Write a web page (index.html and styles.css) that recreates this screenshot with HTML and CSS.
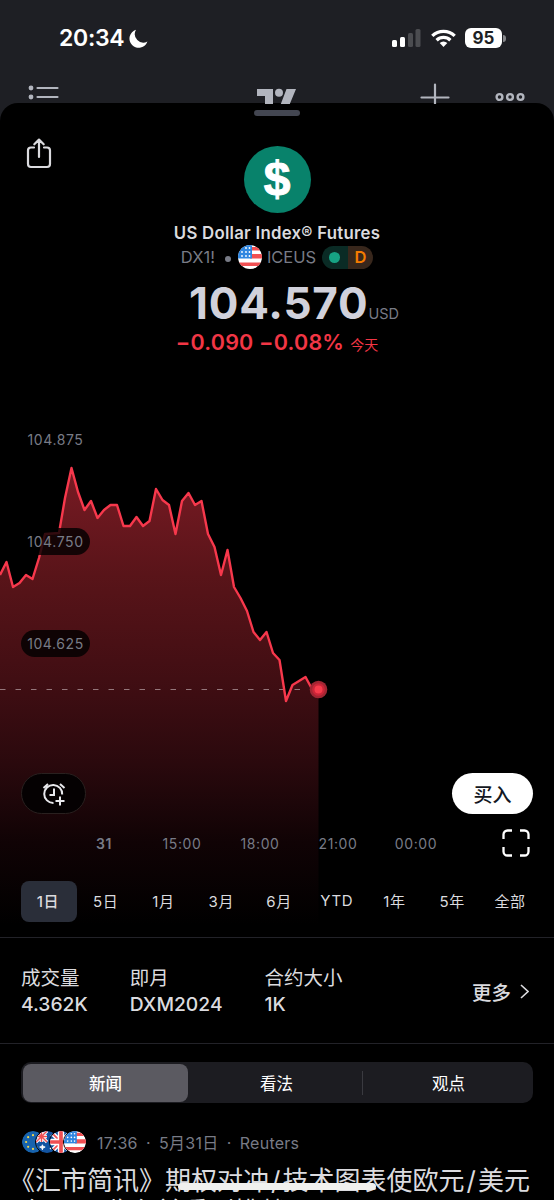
FILE: index.html
```
<!DOCTYPE html>
<html lang="zh-CN">
<head>
  <meta charset="utf-8">
  <meta name="viewport" content="width=device-width, initial-scale=1.0">
  <title>US Dollar Index Futures</title>
  <link rel="stylesheet" href="styles.css">
</head>
<body>

  <!-- Shared flag symbols -->
  <svg class="defs" width="0" height="0">
    <clipPath id="round"><circle cx="12" cy="12" r="12"/></clipPath>
    <symbol id="flag-us" viewBox="0 0 24 24">
      <g clip-path="url(#round)">
        <rect width="24" height="24" fill="#fff"/>
        <path d="M12 2h12v3.500H12zM12 9h12v4.500H12zM0 17.500h24v3.500H0z" fill="#f04f52"/>
        <rect width="14" height="13.500" fill="#2f86e0"/>
        <g fill="#fff">
          <circle cx="8" cy="3" r=".9"/><circle cx="11.500" cy="3" r=".9"/>
          <circle cx="4" cy="7" r=".9"/><circle cx="8" cy="7" r=".9"/><circle cx="11.500" cy="7" r=".9"/>
          <circle cx="4" cy="11" r=".9"/><circle cx="8" cy="11" r=".9"/><circle cx="11.500" cy="11" r=".9"/>
        </g>
      </g>
    </symbol>
    <symbol id="flag-eu" viewBox="0 0 24 24">
      <circle cx="12" cy="12" r="12" fill="#1763ad"/>
      <g fill="#f5d84a">
        <circle cx="12" cy="4.500" r="1.200"/><circle cx="17.300" cy="6.700" r="1.200"/><circle cx="19.500" cy="12" r="1.200"/><circle cx="17.300" cy="17.300" r="1.200"/>
        <circle cx="12" cy="19.500" r="1.200"/><circle cx="6.700" cy="17.300" r="1.200"/><circle cx="4.500" cy="12" r="1.200"/><circle cx="6.700" cy="6.700" r="1.200"/>
      </g>
    </symbol>
    <symbol id="flag-au" viewBox="0 0 24 24">
      <g clip-path="url(#round)">
        <rect width="24" height="24" fill="#1254a1"/>
        <path d="M0 0l12 12M12 0L0 12" stroke="#fff" stroke-width="3.500"/>
        <path d="M0 6h12M6 0v12" stroke="#fff" stroke-width="4"/>
        <path d="M0 0l12 12M12 0L0 12M0 6h12M6 0v12" stroke="#ef5053" stroke-width="1.600"/>
        <path d="M7 15l.8 2 2.200.500-2.200.800L7 20.500l-.8-2.200L4 17.500l2.200-.5z" fill="#fff" stroke="#fff"/>
        <circle cx="17" cy="5" r="1" fill="#fff"/><circle cx="19" cy="12" r="1" fill="#fff"/><circle cx="16" cy="19" r="1" fill="#fff"/>
      </g>
    </symbol>
    <symbol id="flag-gb" viewBox="0 0 24 24">
      <g clip-path="url(#round)">
        <rect width="24" height="24" fill="#1254a1"/>
        <path d="M0 0l24 24M24 0L0 24" stroke="#fff" stroke-width="5"/>
        <path d="M0 0l24 24M24 0L0 24" stroke="#ef5053" stroke-width="1.800"/>
        <path d="M0 12h24M12 0v24" stroke="#fff" stroke-width="7"/>
        <path d="M0 12h24M12 0v24" stroke="#ef5053" stroke-width="4"/>
      </g>
    </symbol>
  </svg>

  <div class="status-bar">
    <div class="clock">
      <span>20:34</span>
      <svg width="19" height="19" viewBox="0 0 19 19"><path d="M7 .8A9.200 9.200 0 1 0 18.400 12.500 8.500 8.500 0 0 1 7 .8z" fill="#fff"/></svg>
    </div>
    <div class="status-icons">
      <svg width="29" height="18" viewBox="0 0 29 18">
        <rect x="0" y="11" width="5" height="7" rx="1.500" fill="#fff"/>
        <rect x="8" y="8" width="5" height="10" rx="1.500" fill="#fff"/>
        <rect x="16" y="4" width="5" height="14" rx="1.500" fill="#4b4c50"/>
        <rect x="23.500" y="0" width="5" height="18" rx="1.500" fill="#4b4c50"/>
      </svg>
      <svg width="25" height="18" viewBox="0 0 25 18" fill="none" stroke="#fff" stroke-width="3.300">
        <path d="M1.300 6.900a16 16 0 0 1 22.400 0"/>
        <path d="M5.600 11.200a10 10 0 0 1 13.800 0"/>
        <path d="M12.500 18l-3.800-3.900a5.500 5.500 0 0 1 7.600 0z" fill="#fff" stroke="none"/>
      </svg>
      <div class="battery">95</div>
    </div>
  </div>

  <div class="app-bar">
    <svg width="32" height="20" viewBox="0 0 32 20" fill="#b2b5be">
      <circle cx="3" cy="5" r="2.400"/><circle cx="3" cy="14" r="2.400"/>
      <path d="M9.500 5h20M9.500 14h20" stroke="#b2b5be" stroke-width="2.200" stroke-linecap="round"/>
    </svg>
    <svg class="brand" width="40" height="16" viewBox="0 0 40 16" fill="#b2b5be">
      <path d="M0 1h16v15H8V8H0zM29.500 1H39l-6.200 15h-9z"/><circle cx="22" cy="4.800" r="4"/>
    </svg>
    <svg class="plus" width="30" height="21" viewBox="0 0 30 21" stroke="#b2b5be" stroke-width="2.200" stroke-linecap="round"><path d="M1.500 14.500h27M15 1.500V21"/></svg>
    <svg width="30" height="10" viewBox="0 0 30 10" fill="none" stroke="#b2b5be" stroke-width="2.400"><circle cx="4.500" cy="5" r="2.900"/><circle cx="15" cy="5" r="2.900"/><circle cx="25.500" cy="5" r="2.900"/></svg>
  </div>

  <main class="sheet">
    <div class="grabber"></div>
    <svg class="share" width="26" height="32" viewBox="0 0 26 32" fill="none" stroke="#dbdbdf" stroke-width="2.200" stroke-linecap="round" stroke-linejoin="round">
      <path d="M8 10.500H5a3 3 0 0 0-3 3v13.500a3 3 0 0 0 3 3h16a3 3 0 0 0 3-3V13.500a3 3 0 0 0-3-3H18M13 20V2.800M8.300 7.300L13 2.600l4.700 4.700"/>
    </svg>

    <!-- Symbol and price -->
    <header class="symbol">
      <div class="coin">$</div>
      <h1>US Dollar Index® Futures</h1>
      <div class="exchange">
        <span class="ticker">DX1!</span>
        <span class="dot"></span>
        <svg width="24" height="24"><use href="#flag-us"/></svg>
        <span class="market">ICEUS</span>
        <span class="badge"><i class="live"><b></b></i><i class="delay">D</i></span>
      </div>
      <div class="price"><strong>104.570</strong><span>USD</span></div>
      <div class="change"><strong>−0.090 −0.08%</strong><span>今天</span></div>
    </header>

    <section class="chart">
      <svg class="plot" width="554" height="517" viewBox="0 420 554 517">
        <defs>
          <linearGradient id="area" gradientUnits="userSpaceOnUse" x1="0" y1="465" x2="0" y2="925">
            <stop offset="0" stop-color="#7a1b24"/>
            <stop offset=".24" stop-color="#591419"/>
            <stop offset=".5" stop-color="#3d0d12"/>
            <stop offset=".65" stop-color="#2a090d"/>
            <stop offset=".82" stop-color="#100305"/>
            <stop offset="1" stop-color="#000"/>
          </linearGradient>
        </defs>
        <path fill="url(#area)" d="M0 575L6.500 562 13 587 19.500 583 26 575 32.500 579 39 558 45 534 59 533 65 498 71.500 468 78 492 84.500 510 91 501 97.500 518 104 510 110.500 505 117 505 123.500 526 130 526 136.500 517 143 526 149.500 521 156 489 162.500 500 169 505 175.500 534 182 501 188.500 493 195 505 201.500 501 208 534 214.500 547 221 575 227.500 550 234 587 240.500 598 247 611 253.500 632 260 640 266.500 632 273 653 279.500 660 286 701 292.500 685 299 681 305.500 677 312 689 318.500 689V925H0z"/>
        <path d="M0 689.500h318" stroke="#95777b" stroke-width="1" stroke-dasharray="5.500 10"/>
        <path fill="none" stroke="#f7384c" stroke-width="2.400" stroke-linejoin="round" d="M0 575L6.500 562 13 587 19.500 583 26 575 32.500 579 39 558 45 534 59 533 65 498 71.500 468 78 492 84.500 510 91 501 97.500 518 104 510 110.500 505 117 505 123.500 526 130 526 136.500 517 143 526 149.500 521 156 489 162.500 500 169 505 175.500 534 182 501 188.500 493 195 505 201.500 501 208 534 214.500 547 221 575 227.500 550 234 587 240.500 598 247 611 253.500 632 260 640 266.500 632 273 653 279.500 660 286 701 292.500 685 299 681 305.500 677 312 689 318.500 689"/>
        <circle cx="318.500" cy="689.500" r="8.800" fill="#a12633"/>
        <circle cx="318.500" cy="689.500" r="6.300" fill="#cb2538"/>
        <circle cx="318.500" cy="689.500" r="4" fill="#f73c4c"/>
      </svg>

      <div class="overlay">
        <div class="levels">
          <span class="clear">104.875</span>
          <span>104.750</span>
          <span>104.625</span>
        </div>
        <div class="actions">
          <button class="alert">
            <svg width="24" height="24" viewBox="0 0 24 24" fill="none" stroke="#e8e8ec" stroke-width="2">
              <path d="M20.200 12.500A9 9 0 1 0 11.500 20.900M12 6.500V13H7.500M1.500 6L6 2M18 2l4.500 4M18 14.500v9M13.500 19h9"/>
            </svg>
          </button>
          <button class="buy">买入</button>
        </div>
        <div class="times">
          <div class="ticks"><b>31</b><span>15:00</span><span>18:00</span><span>21:00</span><span>00:00</span></div>
          <svg width="28" height="28" viewBox="0 0 28 28" fill="none" stroke="#fff" stroke-width="2.300"><path d="M1.500 10V5.500a4 4 0 0 1 4-4H10M18 1.500h4.500a4 4 0 0 1 4 4V10M26.500 18v4.500a4 4 0 0 1-4 4H18M10 26.500H5.500a4 4 0 0 1-4-4V18"/></svg>
        </div>
        <nav class="ranges">
          <button class="active">1日</button>
          <button>5日</button>
          <button>1月</button>
          <button>3月</button>
          <button>6月</button>
          <button>YTD</button>
          <button>1年</button>
          <button>5年</button>
          <button>全部</button>
        </nav>
      </div>
    </section>

    <section class="stats">
      <div><span>成交量</span><strong>4.362K</strong></div>
      <div><span>即月</span><strong>DXM2024</strong></div>
      <div><span>合约大小</span><strong>1K</strong></div>
      <a class="more">更多
        <svg width="9" height="15" viewBox="0 0 9 15" fill="none" stroke="#dbdbdf" stroke-width="1.600"><path d="M1 1l7 6.500L1 14"/></svg>
      </a>
    </section>

    <!-- News -->
    <section class="news">
      <div class="tabs">
        <button class="active">新闻</button>
        <button>看法</button>
        <button>观点</button>
      </div>
      <div class="meta">
        <div class="flags">
          <svg width="24" height="24"><use href="#flag-eu"/></svg>
          <svg width="24" height="24"><use href="#flag-au"/></svg>
          <svg width="24" height="24"><use href="#flag-gb"/></svg>
          <svg width="24" height="24"><use href="#flag-us"/></svg>
        </div>
        <span>17:36 · 5月31日 · Reuters</span>
      </div>
      <h2>《汇市简讯》期权对冲<i>/</i>技术图表使欧元<i>/</i>美元<br><span>在1.08 收在前看到挑战</span></h2>
    </section>
  </main>
  <div class="home-indicator"></div>

</body>
</html>
```
FILE: styles.css
```
* {
  box-sizing: border-box;
  margin: 0;
  padding: 0;
}

body {
  width: 554px;
  height: 1200px;
  overflow: hidden;
  background: #1e1f24;
  color: #dbdbdf;
  font-family: Inter, "Noto Sans CJK SC", sans-serif;
}

svg {
  display: block;
  flex: none;
}

.defs {
  position: absolute;
}

button {
  border: none;
  background: none;
  color: inherit;
  font: inherit;
}

i {
  font-style: normal;
}

/* Status bar */
.status-bar {
  height: 76px;
  padding: 0 49px 0 59px;
  display: flex;
  justify-content: space-between;
  align-items: center;
  color: #fff;
}

.clock {
  display: flex;
  align-items: center;
  gap: 5px;
  font-size: 23px;
  font-weight: 600;
  letter-spacing: -0.3px;
}

.status-icons {
  display: flex;
  align-items: center;
  gap: 9px;
}

.status-icons svg:first-child {
  margin-right: 1px;
}

.battery {
  width: 37px;
  height: 20px;
  margin-right: 3px;
  border-radius: 6px;
  background: #fff;
  color: #1e1f24;
  font-size: 17px;
  font-weight: 700;
  line-height: 20px;
  text-align: center;
  position: relative;
}

.battery::after {
  content: "";
  position: absolute;
  right: -4px;
  top: 7px;
  width: 3px;
  height: 7px;
  border-radius: 0 3px 3px 0;
  background: #85868a;
}

/* Dimmed app bar behind the sheet */
.app-bar {
  height: 27px;
  padding: 7px 29px 0 28px;
  display: flex;
  align-items: flex-start;
}

.brand {
  margin: 5px 0 0 197px;
}

.plus {
  margin-left: 123px;
}

.app-bar svg:last-child {
  margin: 9px 0 0 auto;
}

.sheet {
  height: 1097px;
  overflow: hidden;
  border-radius: 18px 18px 0 0;
  background: #000;
}

.grabber {
  width: 46px;
  height: 6px;
  margin: 7px auto 0;
  border-radius: 3px;
  background: #434651;
}

.share {
  margin: 21px 0 0 26px;
}

/* Symbol */
.symbol {
  height: 275px;
  margin-top: -24px;
  display: flex;
  flex-direction: column;
  align-items: center;
}

.coin {
  width: 67px;
  height: 67px;
  margin-top: 1px;
  border-radius: 50%;
  background: #08826b;
  color: #fff;
  font: bold 48px/66px "Liberation Sans", sans-serif;
  text-align: center;
  -webkit-text-stroke: 1px #fff;
}

.symbol h1 {
  margin-top: 10px;
  font-size: 16.8px;
  font-weight: 600;
  line-height: 20px;
  letter-spacing: 0.25px;
}

.exchange {
  height: 24px;
  margin-top: 2px;
  display: flex;
  align-items: center;
  color: #787b86;
  font-size: 16.5px;
}

.dot {
  width: 6px;
  height: 6px;
  margin: 3px 7px 0 10px;
  border-radius: 50%;
  background: #787b86;
}

.market {
  margin: 0 6px 0 5px;
}

.badge {
  width: 51px;
  height: 23px;
  border-radius: 12px;
  overflow: hidden;
  display: flex;
}

.badge i {
  flex: 1;
  display: flex;
  align-items: center;
  justify-content: center;
}

.live {
  background: #0a2b25;
}

.live b {
  width: 11px;
  height: 11px;
  border-radius: 50%;
  background: #16a283;
}

.delay {
  background: #38271c;
  color: #f57c00;
  font-weight: 600;
}

.price {
  height: 52px;
  margin: 8px 0 0 34px;
  display: flex;
  align-items: baseline;
  line-height: 52px;
}

.price strong {
  font-size: 44px;
  font-weight: 700;
  letter-spacing: 0.8px;
  color: #d1d1db;
}

.price span {
  color: #787b86;
  font-size: 14.5px;
}

.change {
  height: 26px;
  display: flex;
  align-items: baseline;
  gap: 6px;
  color: #f23645;
  line-height: 26px;
}

.change strong {
  font-size: 21.5px;
  font-weight: 600;
  letter-spacing: 0.2px;
}

.change span {
  font-size: 14px;
}

/* Chart with its controls stacked in one grid cell */
.chart {
  height: 518px;
  display: grid;
  grid-template-columns: 554px;
  border-bottom: 1px solid #222228;
}

.plot,
.overlay {
  grid-area: 1 / 1;
}

.overlay {
  padding: 6px 21px 0;
}

.levels {
  height: 347px;
  display: flex;
  flex-direction: column;
  align-items: flex-start;
  gap: 75px;
}

.levels span {
  width: 69px;
  height: 27px;
  border-radius: 14px;
  background: rgba(0, 0, 0, 0.8);
  color: #787b86;
  font-size: 14px;
  line-height: 27px;
  text-align: center;
  letter-spacing: 0.6px;
}

.levels .clear {
  background: none;
}

.actions {
  height: 41px;
  display: flex;
  justify-content: space-between;
}

.alert {
  width: 65px;
  border: 1px solid #29201f;
  border-radius: 21px;
  background: #050102;
  display: flex;
  align-items: center;
  justify-content: center;
}

.buy {
  width: 81px;
  border-radius: 21px;
  background: #fff;
  color: #131722;
  font-size: 19px;
  font-weight: 500;
}

.times {
  height: 28px;
  margin: 15px 3px 0 44px;
  display: flex;
  align-items: center;
  justify-content: space-between;
  color: #787b86;
  font-size: 14px;
  letter-spacing: 0.6px;
}

.ticks {
  width: 390px;
  display: grid;
  grid-template-columns: repeat(5, 1fr);
  text-align: center;
}

.ticks b {
  font-weight: 600;
}

.ranges {
  width: 518px;
  height: 41px;
  margin-top: 24px;
  display: grid;
  grid-template-columns: repeat(9, 56px);
  gap: 1.75px;
  font-size: 15px;
}

.ranges button {
  padding: 0 2px 2px 0;
  letter-spacing: 0.6px;
}

.ranges .active {
  border-radius: 8px;
  background: #2a2e39;
  font-weight: 500;
}

/* Contract details */
.stats {
  height: 106px;
  padding: 27px 25px 0 21px;
  display: flex;
  border-bottom: 1px solid #222228;
}

.stats div {
  display: flex;
  flex-direction: column;
  margin-right: 42px;
  line-height: 26px;
}

.stats span {
  font-size: 19.5px;
}

.stats strong {
  font-size: 19.3px;
  font-weight: 500;
}

.more {
  height: 52px;
  margin-left: auto;
  display: flex;
  align-items: center;
  gap: 9px;
  font-size: 19.5px;
  font-weight: 500;
}

/* News */
.news {
  padding: 18px 21px 0;
}

.tabs {
  height: 41px;
  padding: 2px;
  border-radius: 10px;
  background: #1c1c21;
  display: grid;
  grid-template-columns: 165px 1fr 169px;
  color: #fff;
  font-size: 16.5px;
}

.tabs button + button {
  margin: 7px 0;
  padding-left: 3px;
}

.tabs button + button + button {
  border-left: 1px solid #3a3a40;
}

.tabs .active {
  border-radius: 8px;
  background: #5b5a61;
  font-weight: 500;
}

.meta {
  height: 24px;
  margin-top: 27px;
  display: flex;
  align-items: center;
  color: #787b86;
  font-size: 16px;
  letter-spacing: 0.25px;
  word-spacing: 3.5px;
}

.flags {
  display: flex;
  margin-right: 10px;
}

.flags svg {
  border-radius: 50%;
  border: 1px solid #000;
}

.flags svg + svg {
  margin-left: -10px;
}

.news h2 {
  height: 46px;
  overflow: hidden;
  margin: 11px -30px 0 -12px;
  font-size: 26px;
  font-weight: 400;
  line-height: 31px;
  white-space: nowrap;
}

.news h2 i {
  display: inline-block;
  width: 13.5px;
  text-align: center;
}

.news h2 span {
  margin-left: 12px;
}

.home-indicator {
  position: absolute;
  left: 178px;
  top: 1183px;
  width: 198px;
  height: 7px;
  border-radius: 4px;
  background: #f0f0ee;
}
```
